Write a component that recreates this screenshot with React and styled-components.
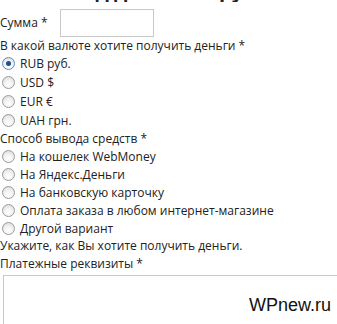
import React from "react";
import styled, { createGlobalStyle } from "styled-components";

const GlobalStyle = createGlobalStyle`
  html, body { margin: 0; padding: 0; background: #fff; }
  body { font-family: "Open Sans", "Noto Sans", sans-serif; color: #222; overflow: hidden; }
`;

const currencies = [
  { id: "rub", label: "RUB руб.", checked: true },
  { id: "usd", label: "USD $" },
  { id: "eur", label: "EUR €" },
  { id: "uah", label: "UAH грн." },
];

const methods = [
  "На кошелек WebMoney",
  "На Яндекс.Деньги",
  "На банковскую карточку",
  "Оплата заказа в любом интернет-магазине",
  "Другой вариант",
];

function App() {
  return (
    <Page>
      <GlobalStyle />
      <Heading>Вывод денег из группы</Heading>
      <SumRow>
        <Label>Сумма *</Label>
        <SumInput />
      </SumRow>
      <Label $h={17}>В какой валюте хотите получить деньги *</Label>
      <Group>
        {currencies.map((c) => (
          <Option key={c.id} $h={19}>
            <Radio $checked={c.checked} />
            <span>{c.label}</span>
          </Option>
        ))}
      </Group>
      <Label $h={17}>Способ вывода средств *</Label>
      <Group>
        {methods.map((m) => (
          <Option key={m} $h={18}>
            <Radio />
            <span>{m}</span>
          </Option>
        ))}
      </Group>
      <Label $h={18}>Укажите, как Вы хотите получить деньги.</Label>
      <Label $h={18}>Платежные реквизиты *</Label>
      <Area>
        <Watermark>WPnew.ru</Watermark>
      </Area>
    </Page>
  );
}

const Page = styled.div`
  position: relative;
  width: 337px;
  height: 324px;
  overflow: hidden;
  font-size: 12px;
`;

const Heading = styled.div`
  margin-top: -21px;
  margin-left: 40px;
  height: 23px;
  font-size: 20px;
  line-height: 24px;
  font-weight: 700;
  white-space: nowrap;
  overflow: hidden;
  color: #222;
`;

const SumRow = styled.div`
  display: flex;
  align-items: center;
  gap: 10px;
  margin-top: 7px;
  height: 28px;
`;

const Label = styled.div`
  height: ${(p) => p.$h || 16}px;
  line-height: ${(p) => p.$h || 16}px;
  white-space: nowrap;
`;

const SumInput = styled.div`
  width: 92px;
  height: 26px;
  border: 1px solid #c8c8c8;
  margin-left: 2px;
`;

const Group = styled.div`
  display: flex;
  flex-direction: column;
`;

const Option = styled.label`
  display: flex;
  align-items: center;
  gap: 5px;
  height: ${(p) => p.$h}px;
  padding-left: 2px;
  white-space: nowrap;
`;

const Radio = styled.span`
  position: relative;
  flex: none;
  width: 11px;
  height: 11px;
  border-radius: 50%;
  border: 1px solid ${(p) => (p.$checked ? "#5a8fc8" : "#9a9a9a")};
  background: radial-gradient(circle at 50% 70%, #ffffff 0%, #f2f2f2 45%, #d6d6d6 100%);
  &::after {
    content: "";
    display: ${(p) => (p.$checked ? "block" : "none")};
    position: absolute;
    left: 3px;
    top: 3px;
    width: 5px;
    height: 5px;
    border-radius: 50%;
    background: #1f4f8a;
  }
`;

const Area = styled.div`
  position: relative;
  margin: 2px 0 0 3px;
  height: 60px;
  border: 1px solid #c8c8c8;
  border-right: none;
`;

const Watermark = styled.div`
  position: absolute;
  right: 6px;
  top: 18px;
  font-family: "Liberation Sans", Arial, sans-serif;
  font-size: 18px;
  line-height: 22px;
  color: #111;
`;

export default App;
